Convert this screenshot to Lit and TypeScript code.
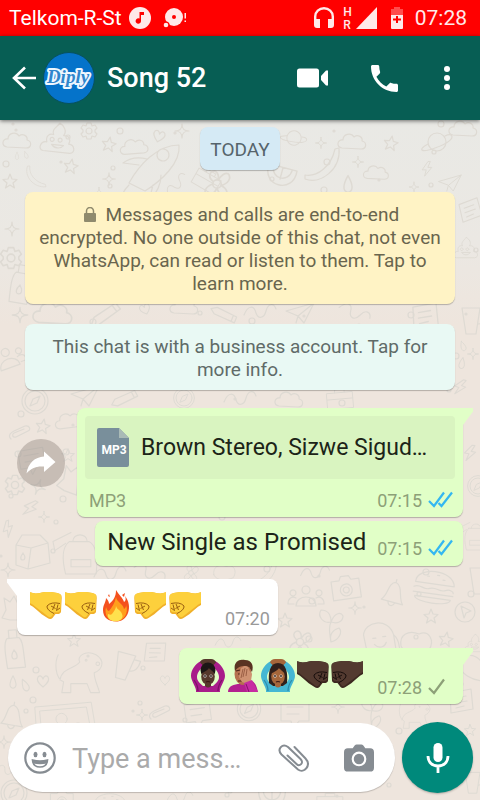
import { LitElement, html, css, svg } from "lit";
import { customElement, property } from "lit/decorators.js";
import { classMap } from "lit/directives/class-map.js";

type Placement = [shape: string, x: number, y: number, scale: number, turn: number];

const SHAPES: Record<string, string> = {
  cloud: "M-11 6C-17 5-16-3-10-2C-10-8-2-10 1-5C5-8 10-5 9-1C14 0 14 7 8 7Z",
  star: "M0-7L2-2L7-1.500L3 2L4.500 7L0 4L-4.500 7L-3 2L-7-1.500L-2-2Z",
  spark: "M0-7C0-2 2 0 7 0C2 0 0 2 0 7C0 2-2 0-7 0C-2 0 0-2 0-7Z",
  heart: "M0 6C-5 2-7-1-5-4C-3-6-1-5 0-2C1-5 3-6 5-4C7-1 5 2 0 6Z",
  gear: "M-2-8H2L3-5L6-6L8-3L6-1V1L8 3L6 6L3 5L2 8H-2L-3 5L-6 6L-8 3L-6 1V-1L-8-3L-6-6L-3-5ZM3 0A3 3 0 1 1-3 0A3 3 0 1 1 3 0",
  poop: "M-14 11C-20 10-17 1-11 2C-13-4-9-7-5-6C-8-11-2-14 0-18C5-16 8-10 5-6C11-7 13-2 11 2C17 2 19 10 13 11ZM-4-1A2 2 0 1 1-4-1.100M4-1A2 2 0 1 1 4-1.100M-6 4C-3 8 3 8 6 4Z",
  rocket: "M-26 16C-16-2 2-22 24-22C26-4 6 14-10 24ZM-16-2L-32-4C-24-10-16-10-8-8M-2 18L-6 34C2 26 6 18 6 8M14-12A6 6 0 1 1 14-12.100M-26 18C-32 24-34 30-34 34",
  banana: "M-16 12C-4 14 10 4 14-14L18-15C20 6 0 22-16 16Z",
  bolt: "M1-9L-6 1H-1L-3 9L6-2H1L4-9Z",
  planet: "M9 0A9 9 0 1 1-9 0A9 9 0 1 1 9 0M-9 2C-20 8-16 11-2 6C10 2 18-4 14-7C12-8 10-7 8-6",
  plane: "M-14-2L14-10L4 10L-2 3ZM14-10L-2 3L-4 10",
  drop: "M0-7C4 0 5 6 0 7C-5 6-4 0 0-7Z",
  clip: "M-9 5C-13 1-8-2-6-3L5-8C10-9 11-4 8-3L-4 3C-8 4-8 0-6-1L4-5",
  compass: "M13 0A13 13 0 1 1-13 0A13 13 0 1 1 13 0M10 0A10 10 0 1 1-10 0A10 10 0 1 1 10 0M-5 5L-2-2L5-5L2 2Z",
  milk: "M-16-6L-10-16H8L16-8L18 12L-4 18L-16 14ZM-16-6L-1-3L16-8M-1-3L-4 18M-9 2C-6 6-7 9-9 9C-12 9-12 6-9 2",
  bag: "M-12-16H10C18-12 20 0 18 20H-16C-20 4-20-10-12-16ZM-8-16C-8-26 8-26 8-16M-10 4H12V12H-10ZM-16-14L-28-6L-30-16L-10-26",
  bottle: "M-6-12H6C10-8 9 0 10 18H-8C-9 4-10-8-6-12ZM-4-12V-20H4V-12M0 0C4 5 3 9 0 9C-3 9-4 5 0 0",
  dog: "M-20 10C-18-4-4-2 2-10C-2-16 8-24 20-18C30-12 28-2 18 2C18 10 22 16 24 24H14L10 14H-8L-8 24H-18L-16 12C-26 8-26-10-22-18M10-12A1 1 0 1 1 10-12.100M24-8A2 2 0 1 1 24-8.100",
  bell: "M-10 8C-4 2-8-10 0-12C8-10 6 2 12 8ZM-3 8C-2 13 3 13 4 8M0-12V-15",
  leaf: "M-8-12L-2-8L2-14L6-6L12-6L8 2L10 10L-2 10L-10 8L-6 0Z",
  laptop: "M-36-10L34-16L40 20H-34ZM-30-5L28-10L33 16H-28ZM4 5A7 7 0 1 1 4 4.900",
  people: "M4-8A4 4 0 1 1-4-8A4 4 0 1 1 4-8M-10 8C-10-4 10-4 10 8ZM-10-5A3 3 0 1 1-10-5.100M16-5A3 3 0 1 1 16-5.100M-12 6H-18C-18 0-14-2-10 0M12 6H18C18 0 14-2 10 0",
  camera: "M-14-8H-6L-4-12H4L6-8H14V11H-14ZM6 2A6 6 0 1 1-6 2A6 6 0 1 1 6 2M3 2A3 3 0 1 1-3 2A3 3 0 1 1 3 2",
  burger: "M-19-3C-20-19 18-20 20-3ZM-20 2C-14-2-10 5-4 2C2-1 6 5 12 2C16 0 20 2 20 4M-20 7H20M-18 11C-18 18 18 18 18 11ZM-8-10H-6M2-12H4M8-8H10",
  cursor: "M10 0A10 10 0 1 1-10 0A10 10 0 1 1 10 0M-4-6L6-1L1 1L-1 6Z",
  ice: "M-10 26L-14-6C-12-20 12-22 16-4L18 24ZM-5-2H-2M5-3H8M-4 4C0 9 6 8 8 3M16-4C22 2 22 16 18 24",
  sprout: "M0 16C-2 4-2 0 0-4M0-4C-8-2-14-10-10-16C-4-16 0-12 0-4C4-14 10-14 12-10C12-4 6-2 0-4M0 16C8 14 12 6 8 2C2 4-2 8 0 16",
  potato: "M-16 4C-18-8-8-12 2-8C12-12 18-2 12 8C4 12-12 14-16 4Z",
  note: "M-11-8L10-12L12 8L-10 12ZM-6-3L5-5M-6 2L6 0M-5 7L3 5",
  chat: "M-14-12H14V8H4L-2 16L-4 8H-14ZM-8-6H8M-8 1H4",
  box: "M-16-8H16V12H-16ZM-16 0H16M-6-8V-12H6V-8",
  pencil: "M-12 8L-10 2L8-10L12-5L-6 8ZM5-8L9-3",
  flower: "M3 0A3 3 0 1 1-3 0A3 3 0 1 1 3 0M-3-2C-10-8 2-14 1-3C8-14 14-2 3 1C12 6 4 14 0 3C-6 14-14 4-3 0",
  melon: "M-12-10H12C14 10-14 10-12-10ZM-8-10C-8 2 8 2 8-10M0-10V0",
  wave: "M-16 4C-12-6-6-6-4 2C-2 8 4 8 6 0C8-8 14-8 16-2",
  cup: "M-8-12H10L6 14H-4ZM10-8H16C16 0 12 4 8 4",
};

const DOODLES: Placement[] = [
  ["cloud", 18, 141, 1, 0], ["poop", 58, 141, 1, 6], ["gear", 89, 131, 1, 0], ["star", 109, 144, 1, 10],
  ["cloud", 135, 147, 1, -8], ["heart", 159, 136, 1, 15], ["spark", 182, 131, 1, 0], ["rocket", 155, 167, 1, 0],
  ["star", 71, 166, 1, 10], ["star", 10, 181, 1, 0], ["drop", 17, 156, 0.5, 0], ["drop", 26, 155, 0.5, -20],
  ["banana", 37, 176, 0.6, 90], ["spark", 109, 179, 0.9, 0], ["spark", 99, 193, 0.8, 0], ["wave", 176, 184, 0.8, -40],
  ["flower", 217, 184, 1.4, 0], ["planet", 294, 138, 0.8, 30], ["spark", 321, 143, 0.8, 0], ["cloud", 353, 142, 1, 0],
  ["star", 391, 143, 1, 10], ["planet", 437, 142, 1, 0], ["cloud", 464, 129, 1, 0], ["banana", 321, 163, 1, 0],
  ["spark", 358, 162, 0.8, 0], ["cloud", 377, 173, 0.9, 0], ["bolt", 427, 169, 0.8, 0], ["plane", 450, 183, 0.8, 0],
  ["melon", 280, 179, 1.2, 15], ["box", 207, 180, 0.8, 30], ["drop", 348, 184, 1.2, 0], ["spark", 414, 187, 0.7, 0],
  ["spark", 12, 229, 1, 0], ["gear", 11, 258, 1.300, 0], ["bottle", 20, 285, 1, 10], ["spark", 20, 315, 1.1, 0],
  ["cloud", 54, 314, 1.4, 0], ["pencil", 106, 315, 1.2, 0], ["heart", 145, 309, 0.9, -20], ["cloud", 185, 307, 1, 0],
  ["pencil", 224, 315, 1, 60], ["wave", 260, 311, 1, 0], ["plane", 300, 313, 1, 0], ["wave", 355, 312, 1, 30],
  ["note", 425, 316, 1.1, 0], ["cup", 470, 320, 1, 0], ["poop", 466, 250, 0.7, 0], ["note", 470, 210, 0.9, -10],
  ["people", 8, 360, 1, -20], ["drop", 463, 346, 0.7, -20], ["spark", 473, 354, 0.8, 0], ["drop", 462, 363, 0.8, 10],
  ["compass", 35, 401, 1, 0], ["plane", 85, 396, 1, 0], ["compass", 184, 398, 0.8, 0], ["pencil", 125, 399, 1, 10],
  ["wave", 240, 398, 1, 0], ["box", 340, 399, 0.8, -5], ["cloud", 290, 400, 1, 0], ["bolt", 460, 387, 0.9, 20],
  ["clip", 20, 434, 1, 0], ["star", 43, 426, 1, 10], ["cloud", 70, 421, 1, -10], ["chat", 32, 460, 0.9, -10],
  ["star", 68, 455, 0.9, 0], ["gear", 15, 485, 1.200, 0], ["spark", 38, 487, 1.1, 20], ["leaf", 70, 481, 1.100, 20],
  ["bolt", 30, 508, 1, 30], ["spark", 44, 517, 0.8, 0], ["bolt", 8, 529, 0.9, -20], ["milk", 32, 551, 1, 0],
  ["bag", 80, 556, 0.9, 0], ["spark", 8, 570, 1, 0], ["leaf", 12, 610, 1, 0], ["bottle", 14, 650, 1, -5],
  ["bolt", 470, 453, 0.9, 10], ["compass", 478, 486, 0.8, 0], ["bag", 476, 538, 0.6, 0], ["wave", 110, 573, 1, 0],
  ["wave", 150, 572, 1, 30], ["flower", 191, 573, 0.8, 0], ["potato", 225, 572, 0.7, 0], ["banana", 262, 572, 0.8, 0],
  ["wave", 315, 572, 0.9, 0], ["dog", 78, 671, 0.9, 0], ["star", 74, 640, 0.9, 0], ["drop", 13, 682, 0.9, 0],
  ["drop", 25, 685, 0.9, -25], ["heart", 43, 681, 1, 0], ["cup", 123, 665, 1, 15], ["note", 155, 652, 0.9, 10],
  ["heart", 165, 680, 0.8, 0], ["bell", 12, 717, 1, 10], ["laptop", 64, 715, 0.8, 0], ["people", 306, 598, 1, 0],
  ["camera", 346, 588, 1, -8], ["bell", 393, 594, 1, 15], ["burger", 434, 587, 1, 8], ["spark", 355, 608, 0.9, 0],
  ["cursor", 465, 612, 1, 0], ["star", 431, 616, 1, 0], ["sprout", 331, 626, 1, 0], ["ice", 378, 640, 1, -5],
  ["potato", 417, 642, 1, 0], ["star", 446, 639, 1, 10], ["poop", 475, 645, 0.6, 0], ["star", 285, 620, 1, 0],
  ["flower", 300, 642, 1.2, 0], ["potato", 476, 668, 1, 30], ["cup", 478, 580, 1, 0], ["wave", 228, 642, 0.8, 0],
  ["compass", 249, 709, 0.9, 0], ["chat", 295, 713, 1, 0], ["spark", 338, 707, 0.9, 0], ["sprout", 372, 714, 0.9, 0],
  ["dog", 414, 714, 0.6, 0], ["note", 461, 701, 1, 0], ["chat", 198, 714, 0.9, -8], ["spark", 142, 715, 0.8, 0],
  ["clip", 160, 714, 1, 0], ["compass", 14, 793, 1, 0], ["burger", 110, 806, 0.8, 0], ["camera", 62, 800, 0.8, 0],
  ["wave", 180, 797, 0.8, 0], ["melon", 272, 801, 1.1, 0], ["box", 330, 803, 0.8, 0], ["cup", 472, 782, 0.8, 0],
  ["spark", 4, 742, 0.9, 0], ["star", 470, 730, 0.8, 0], ["wave", 8, 770, 0.7, 20],
];

const DOTS: [number, number, number][] = Array.from({ length: 150 }, (_, i) => [
  (i * 97 + 13) % 480,
  124 + ((i * 61 + ((i * i) % 37)) % 674),
  1 + (i % 3),
]);

const SKIN_YELLOW = ["#fdd03c", "#f0b02a", "#9a5f10"];
const SKIN_DARK = ["#533a30", "#3d2820", "#170d0b"];

const fist = (skin: string[], mirrored: boolean) => svg`
  <g transform=${mirrored ? "translate(35 0) scale(-1 1)" : "translate(0 0)"}>
    <path d="M2 3.300C6 5 10 4.500 14 3.500C19 2.500 27 3 32 5Q34 6 33.700 9L33 22.700Q32.500 25.500 27.500 25L24.500 29Q22.500 31 19.500 29L13.700 25.300C10 22 6 18 2 16Z" fill=${skin[1]}/>
    <path d="M2 3.300C6 5 10 4.500 14 3.500C19 2.500 27 3 32 5Q33.500 6 33.200 8L32 22Q30 24 26.500 23L23.500 27.500Q22 29 20 27.500L14.700 23.300C10 20 6 16 2 14Z" fill=${skin[0]}/>
    <path d="M19 17Q23 12.500 32 14.500M19 17Q18.500 21 26 24.500M23 17L27.500 19.500M27 15L24.500 21M30 15.500L28.500 21.500L32 19" fill="none" stroke=${skin[2]} stroke-width="1"/>
  </g>`;

const fire = svg`
  <path d="M18 1C21 6 25 9 26 13C28 12 28 9 27 7C31 12 32 18 30 24C28 30 23 32.500 18 32.500C11 32.500 5 29 5 21C5 16 8 13 8 9C10 11 11 13 11 15C16 11 18 7 18 1Z" fill="#f4511e"/>
  <path d="M10 7L11 5L12 8ZM24 6L27 4L26 8Z" fill="#f4511e"/>
  <path d="M18 8C19 14 25 14 26 20C28 19 28 17 28 16C31 24 26 32 18 32C10 32 6 26 8 18C9 21 10 22 11 22C14 18 17 14 18 8Z" fill="#ff9f1c"/>
  <path d="M18 17C19 21 23 21 24 25C26 29 22 32.300 18 32.300C12 32.300 9 29 10 25C12 26 13 26 14 25C16 22 18 20 18 17Z" fill="#ffe14d"/>`;

const okPerson = (sleeve: string, shade: string, skin: string, hair: string, long: boolean) => svg`
  <path d="M6 34C7 30 1 23 1 18C1 12 5 6 11 3L15 7C10 11 7 15 7 19C7 23 10 25 13 28H23C26 25 29 23 29 19C29 15 26 11 21 7L25 3C31 6 35 12 35 18C35 23 29 30 30 34Z" fill=${sleeve}/>
  <path d="M4 22Q8 27 8 33M32 22Q28 27 28 33" fill="none" stroke=${shade} stroke-width="1.200"/>
  <path d="M10 4.500Q11 1 15 1H21Q25 1 26 4.500L22.500 8Q18 3.500 13.500 8Z" fill=${skin}/>
  ${long ? svg`<path d="M9 25C8 14 10 5 18 5S28 14 27 25L23 28H13Z" fill=${hair}/>` : svg`<ellipse cx="18" cy="12" rx="7.500" ry="7.500" fill=${hair}/>`}
  <path d="M15 23H21V28Q18 31 15 28Z" fill=${skin}/>
  <ellipse cx="18" cy="18.500" rx="6.800" ry="8.500" fill=${skin}/>
  <path d="M11 15.500C11 6 25 6 25 15.500C22 13 20 11 19 10C17 13 14 14 11 15.500Z" fill=${hair}/>
  <circle cx="15" cy="18" r="1.500" fill="#fff"/><circle cx="21" cy="18" r="1.500" fill="#fff"/>
  <circle cx="15" cy="18" r="0.900" fill="#180b08"/><circle cx="21" cy="18" r="0.900" fill="#180b08"/>
  <path d="M16 24Q18 23 20 24" stroke="#3a1512" stroke-width="1.200" fill="none"/>`;

const facepalm = svg`
  <path d="M3 34C3 28 9 26 15 26L27 23C31 25 32 30 33 34Z" fill="#b3208f"/>
  <ellipse cx="18" cy="16" rx="8.500" ry="11" fill="#b5714f"/>
  <path d="M10 13C8 4 14 1 20 2C27 2 29 8 27 14L24 9C19 7 13 8 10 13Z" fill="#5a3323"/>
  <path d="M11 13L15 12M13 16H15M13 23H17" stroke="#4a2318" stroke-width="1.200"/>
  <path d="M14 19L16 10L18 9L19 8L21 8L23 9L24 12L27 16L26 23L22 26L17 24Z" fill="#cf9272"/>
  <path d="M16 20L18 11M18 19L20 10M21 18L22 11" stroke="#8e5238" stroke-width="0.800"/>
  <path d="M19 25L27 22L33 34H22Z" fill="#c72ca2"/><path d="M21 26L24 34" stroke="#85146a" stroke-width="1"/>`;

const EMOJI: Record<string, { label: string; art: unknown }> = {
  rightFist: { label: "right-facing fist", art: fist(SKIN_YELLOW, false) },
  leftFist: { label: "left-facing fist", art: fist(SKIN_YELLOW, true) },
  rightFistDark: { label: "right-facing fist, dark", art: fist(SKIN_DARK, false) },
  leftFistDark: { label: "left-facing fist, dark", art: fist(SKIN_DARK, true) },
  fire: { label: "fire", art: fire },
  manOk: { label: "man gesturing OK", art: okPerson("#a91c8a", "#7a1063", "#56382c", "#1d1716", false) },
  womanOk: { label: "woman gesturing OK", art: okPerson("#45b7d3", "#2b8aa8", "#a5663b", "#30201c", true) },
  facepalm: { label: "man facepalming", art: facepalm },
};

const reset = css`
  * { box-sizing: border-box; }
  svg { display: block; flex: none; }
  button { display: grid; place-items: center; flex: none; margin: 0; padding: 0; border: 0; background: none; color: inherit; font: inherit; cursor: pointer; }
`;

@customElement("status-bar")
class StatusBar extends LitElement {
  static styles = [reset, css`
    :host { display: flex; align-items: center; height: 36px; padding: 0 13px 0 9px; background: #f00; color: #ffe9e9; font-size: 21px; line-height: 24px; }
    .carrier { color: #fff; margin-right: 7px; }
    .disc { margin-left: 12px; }
    .right { display: flex; align-items: center; margin-left: auto; }
    .roam { font-size: 12px; line-height: 13px; font-weight: 500; margin: 0 4px 0 9px; padding-top: 2px; }
    .battery { margin: 0 12px 0 14px; }
  `];
  render() {
    return html`
      <span class="carrier">Telkom-R-St</span>
      <svg width="22" height="22" viewBox="0 0 22 22" aria-hidden="true">
        <circle cx="11" cy="11" r="11" fill="currentColor"/>
        <path d="M10.500 5H15V8H12V14A2.700 2.700 0 1 1 10.500 11.600Z" fill="#f00"/>
      </svg>
      <svg class="disc" width="25" height="22" viewBox="0 0 25 22" aria-hidden="true">
        <circle cx="11" cy="10" r="9" fill="currentColor"/><circle cx="11" cy="10" r="2" fill="#f00"/>
        <circle cx="3" cy="18" r="3.500" fill="#f00"/><circle cx="3" cy="18" r="2.300" fill="currentColor"/>
        <path d="M21.500 6H23V11.500H21.500ZM21.500 13.500H23V15H21.500Z" fill="currentColor"/>
      </svg>
      <div class="right">
        <svg width="20" height="22" viewBox="0 0 20 22" aria-hidden="true">
          <path d="M1.200 18V9.500A8.800 8.300 0 0 1 18.800 9.500V18" fill="none" stroke="currentColor" stroke-width="2.400"/>
          <path d="M0 12H6V21H3Q0 21 0 18ZM14 12H20V18Q20 21 17 21H14Z" fill="currentColor"/>
        </svg>
        <div class="roam">H<br>R</div>
        <svg width="21" height="22" viewBox="0 0 21 22" aria-hidden="true"><path d="M21 0V22H0Z" fill="currentColor"/></svg>
        <svg class="battery" width="12" height="22" viewBox="0 0 12 22" aria-hidden="true">
          <path d="M3 0H9V2H12V9H0V2H3Z" fill="#ff4d4d"/><path d="M0 8H12V21Q12 22 11 22H1Q0 22 0 21Z" fill="currentColor"/>
          <path d="M5 9H7V11.500H10V13.500H7V16H5V13.500H2V11.500H5Z" fill="#f00"/>
        </svg>
        <time>07:28</time>
      </div>`;
  }
}

@customElement("chat-header")
class ChatHeader extends LitElement {
  static styles = [reset, css`
    :host { display: flex; align-items: center; height: 84px; padding: 0 17px 0 12px; background: #075e54; color: #fff; position: relative; z-index: 1; box-shadow: 0 1px 4px rgba(0, 0, 0, .55); }
    .avatar { width: 52px; height: 52px; margin-left: 7px; }
    h1 { flex: 1; min-width: 0; margin: 0 0 0 12px; font-size: 27px; line-height: 32px; font-weight: 500; }
    .actions { display: flex; align-items: center; gap: 24px; }
    .action { width: 48px; height: 48px; }
    .more { width: 32px; margin-left: -1px; }
    .logo { font: italic 700 19px "Liberation Serif", serif; }
  `];
  render() {
    return html`
      <button aria-label="Back">
        <svg width="24" height="24" viewBox="0 0 24 24"><path d="M13 1.500L2 12L13 22.500M2 12H24" fill="none" stroke="currentColor" stroke-width="2.600"/></svg>
      </button>
      <svg class="avatar" viewBox="0 0 52 52" role="img" aria-label="Diply">
        <circle cx="26" cy="26" r="25.500" fill="#0573ca" stroke="#07515f"/>
        <text class="logo" x="25" y="31" text-anchor="middle" fill="#2f86cc" stroke="#eef7ff" stroke-width="4" stroke-linejoin="round" paint-order="stroke">Diply</text>
      </svg>
      <h1>Song 52</h1>
      <div class="actions">
        <button class="action" aria-label="Video call">
          <svg width="31" height="20" viewBox="0 0 31 20"><rect width="22" height="19" y="0.500" rx="2.500" fill="currentColor"/><path d="M24 8L29 2.500H31V17.500H29L24 12Z" fill="currentColor"/></svg>
        </button>
        <button class="action" aria-label="Voice call">
          <svg width="27" height="27" viewBox="3 3 18 18"><path fill="currentColor" d="M6.620 10.790c1.440 2.830 3.760 5.140 6.590 6.590l2.200-2.200c.270-.270.670-.360 1.020-.240 1.120.370 2.330.570 3.570.570.550 0 1 .450 1 1V20c0 .550-.450 1-1 1-9.390 0-17-7.610-17-17 0-.550.450-1 1-1h3.500c.550 0 1 .450 1 1 0 1.250.200 2.450.570 3.570.110.350.030.740-.250 1.020l-2.200 2.200z"/></svg>
        </button>
        <button class="action more" aria-label="More options">
          <svg width="6" height="24" viewBox="0 0 6 24"><circle cx="3" cy="3" r="3" fill="currentColor"/><circle cx="3" cy="12" r="3" fill="currentColor"/><circle cx="3" cy="21" r="3" fill="currentColor"/></svg>
        </button>
      </div>`;
  }
}

@customElement("message-meta")
class MessageMeta extends LitElement {
  @property() time = "";
  @property() ticks = "";
  static styles = [reset, css`
    :host { display: flex; align-items: center; gap: 6px; flex: none; font-size: 18px; line-height: 22px; color: #8da078; }
    .blue { color: #34b7f1; }
    .incoming { color: #999; }
    .tick { margin-bottom: 4px; }
  `];
  render() {
    return html`<time class=${classMap({ incoming: !this.ticks })}>${this.time}</time>
      ${this.ticks ? html`<svg class=${classMap({ tick: true, blue: this.ticks === "read" })} width="25" height="17" viewBox="0 0 25 17" role="img" aria-label=${this.ticks}>
        <g fill="none" stroke="currentColor" stroke-width="2.200">
          <path d="M1 10L6 15L16 1.500"/>${this.ticks === "read" ? svg`<path d="M10.500 12L13.500 15L24 1.500"/>` : ""}
        </g></svg>` : ""}`;
  }
}

@customElement("message-bubble")
class MessageBubble extends LitElement {
  static properties = { incoming: { type: Boolean, reflect: true }, tail: { type: Boolean, reflect: true } };
  static styles = [reset, css`
    :host { display: block; position: relative; width: fit-content; margin-left: auto; border-radius: 8px; background: #e1ffc7; box-shadow: 0 1px 1px rgba(0, 0, 0, .25); }
    :host([incoming]) { margin-left: 0; background: #fff; }
    :host([tail]) { border-top-right-radius: 0; }
    :host([tail][incoming]) { border-top-left-radius: 0; border-top-right-radius: 8px; }
    :host([tail])::after { content: ""; position: absolute; top: 0; left: 100%; width: 10px; height: 17px; background: inherit; clip-path: polygon(0 0, 100% 0, 100% 20%, 0 100%); }
    :host([tail][incoming])::after { left: auto; right: 100%; clip-path: polygon(0 0, 100% 0, 100% 100%, 0 20%); }
  `];
  render() { return html`<slot></slot>`; }
}

@customElement("app-root")
class AppRoot extends LitElement {
  static styles = [reset, css`
    :host { display: flex; flex-direction: column; min-height: 100vh; font-family: Roboto, "Noto Sans", sans-serif; color: #1c2418; }
    .screen { flex: 1; position: relative; display: flex; flex-direction: column; background: linear-gradient(#e9e9e5, #ebe8e3 18%, #eee5dd 30%, #eee5dd); }
    .wallpaper { position: absolute; inset: 0; width: 100%; height: 100%; overflow: hidden; }
    .chat { position: relative; display: flex; flex-direction: column; padding: 7px 17px 0; }
    .day, .notice { border-radius: 8px; font-size: 19px; line-height: 23px; text-align: center; box-shadow: 0 1px 1px rgba(0, 0, 0, .25); }
    .day { align-self: center; padding: 11px 10px 9px; background: #d5eaf5; color: #56646b; }
    .notice { margin: 22px 8px 0; padding: 11px 10px 9px; background: #fff3c5; color: #69654e; }
    .notice.business { margin-top: 20px; padding: 11px 24px 9px; background: #e9f9f4; color: #606b68; }
    .lock { display: inline-block; margin-right: 2px; vertical-align: -1px; }
    .row { display: flex; align-items: center; gap: 12px; margin-top: 18px; }
    .forward { width: 48px; height: 48px; border-radius: 50%; background: rgba(150, 140, 134, .45); color: #fff; }
    .doc { flex: 1; min-width: 0; }
    .file { display: flex; align-items: center; gap: 12px; margin: 8px 8px 0; height: 63px; padding: 0 12px; border-radius: 4px; background: #d9f4c0; }
    .file-name { min-width: 0; overflow: hidden; white-space: nowrap; text-overflow: ellipsis; font-size: 23px; line-height: 28px; }
    .file-type { font-size: 18px; line-height: 22px; color: #8da078; }
    .footer { display: flex; justify-content: space-between; padding: 11px 10px 5px 12px; }
    .badge { font: 700 12px Roboto, sans-serif; }
    .line { display: flex; align-items: flex-end; gap: 11px; padding: 7px 10px 6px 12px; }
    .line p { margin: 0 0 4px; font-size: 24px; line-height: 28px; }
    .emoji-line { display: flex; align-items: flex-end; gap: 12px; padding: 10px 10px 5px 11px; }
    .emoji-line.in { gap: 22px; padding-right: 8px; }
    .emojis { display: flex; margin-bottom: 7px; }
    .short { margin-top: 4px; }
    .spaced { margin-top: 13px; }
    .composer { position: relative; display: flex; align-items: center; gap: 7px; margin-top: auto; padding: 18px 7px 7px 8px; }
    .pill { flex: 1; min-width: 0; height: 69px; display: flex; align-items: center; padding: 0 21px 0 16px; border-radius: 35px; background: #fff; color: #868c92; box-shadow: 0 1px 1px rgba(0, 0, 0, .2); }
    .pill input { flex: 1; min-width: 0; margin: 0 16px; padding: 2px 0 0; border: 0; outline: 0; background: none; font: 27px/32px Roboto, "Noto Sans", sans-serif; color: #222; text-overflow: ellipsis; }
    .pill input::placeholder { color: #aaa; opacity: 1; }
    .attach { margin: 0 35px 0 16px; }
    .mic { width: 71px; height: 71px; border-radius: 50%; background: #00897b; color: #fff; box-shadow: 0 1px 2px rgba(0, 0, 0, .25); }
  `];

  private emojis(names: string[]) {
    return html`<div class="emojis">${names.map((name) => html`
      <svg width="35" height="34" viewBox="0 0 35 34" role="img" aria-label=${EMOJI[name].label}>${EMOJI[name].art}</svg>`)}</div>`;
  }

  render() {
    return html`
      <status-bar></status-bar>
      <chat-header></chat-header>
      <div class="screen">
        <svg class="wallpaper" aria-hidden="true">
          <g transform="translate(0 -120)" fill="none" stroke="#dedad3" stroke-width="1.200" stroke-linejoin="round" stroke-linecap="round">
            ${DOTS.map(([x, y, r]) => svg`<circle cx=${x} cy=${y} r=${r}/>`)}
            ${DOODLES.map(([shape, x, y, scale, turn]) => svg`<path d=${SHAPES[shape]} transform=${`translate(${x} ${y}) rotate(${turn}) scale(${scale})`}/>`)}
          </g>
        </svg>
        <main class="chat">
          <div class="day">TODAY</div>
          <div class="notice">
            <svg class="lock" width="18" height="15" viewBox="0 0 18 15" aria-hidden="true"><rect x="3" y="6" width="12" height="9" rx="1" fill="#8f8a6d"/><path d="M5.500 6V4A3.500 3.500 0 0 1 12.500 4V6" fill="none" stroke="#8f8a6d" stroke-width="1.500"/></svg>
            Messages and calls are end-to-end encrypted. No one outside of this chat, not even WhatsApp, can read or listen to them. Tap to learn more.
          </div>
          <div class="notice business">This chat is with a business account. Tap for more info.</div>
          <div class="row">
            <button class="forward" aria-label="Forward">
              <svg width="30" height="23" viewBox="0 0 30 23"><path d="M18 0.500L29.500 11L18 21V15.500C10 15 5 17 0.500 22.500C2 12 9 6 18 5.500Z" fill="currentColor"/></svg>
            </button>
            <message-bubble class="doc" tail>
              <div class="file">
                <svg width="32" height="39" viewBox="0 0 32 39" role="img" aria-label="MP3 file">
                  <path d="M2 0H22L32 10V37Q32 39 30 39H2Q0 39 0 37V2Q0 0 2 0Z" fill="#798f9b"/><path d="M22 0L32 10H22Z" fill="#a9bab6"/>
                  <text class="badge" x="17" y="26" text-anchor="middle" fill="#fff">MP3</text>
                </svg>
                <span class="file-name">Brown Stereo, Sizwe Sigud…</span>
              </div>
              <div class="footer"><span class="file-type">MP3</span><message-meta time="07:15" ticks="read"></message-meta></div>
            </message-bubble>
          </div>
          <message-bubble class="short"><div class="line"><p>New Single as Promised</p><message-meta time="07:15" ticks="read"></message-meta></div></message-bubble>
          <message-bubble class="spaced" incoming tail>
            <div class="emoji-line in">${this.emojis(["rightFist", "rightFist", "fire", "leftFist", "leftFist"])}<message-meta time="07:20"></message-meta></div>
          </message-bubble>
          <message-bubble class="spaced" tail>
            <div class="emoji-line">${this.emojis(["manOk", "facepalm", "womanOk", "rightFistDark", "leftFistDark"])}<message-meta time="07:28" ticks="sent"></message-meta></div>
          </message-bubble>
        </main>
        <form class="composer" @submit=${(e: Event) => e.preventDefault()}>
          <div class="pill">
            <button type="button" aria-label="Emoji">
              <svg width="32" height="32" viewBox="0 0 32 32"><circle cx="16" cy="16" r="14.700" fill="none" stroke="currentColor" stroke-width="2.200"/><ellipse cx="11.500" cy="12.500" rx="2" ry="2.700" fill="currentColor"/><ellipse cx="20.500" cy="12.500" rx="2" ry="2.700" fill="currentColor"/><path d="M8.500 18Q16 20 23.500 18Q23 25 16 25T8.500 18Z" fill="none" stroke="currentColor" stroke-width="1.600"/><path d="M8 18Q16 20 24 18L23 21.500Q16 23 9 21.500Z" fill="currentColor"/></svg>
            </button>
            <input type="text" aria-label="Message" placeholder="Type a mess…">
            <button type="button" class="attach" aria-label="Attach">
              <svg width="32" height="32" viewBox="0 0 32 32"><path d="M17 4L28 15.500C34 22 27 31 20.500 26.500L4 11.500C-1 6 5 0 10.500 4L23 16C27 20 22 24 19 21L10 12.500" transform="translate(0.500 1)" fill="none" stroke="currentColor" stroke-width="2" stroke-linecap="round" stroke-linejoin="round"/></svg>
            </button>
            <button type="button" aria-label="Camera">
              <svg width="30" height="28" viewBox="0 0 31 28"><path d="M4 4H9L11 1Q12 0 13 0H18Q19 0 20 1L22 4H27Q31 4 31 8V24Q31 28 27 28H4Q0 28 0 24V8Q0 4 4 4Z" fill="currentColor"/><circle cx="15.500" cy="15" r="6.500" fill="none" stroke="#fff" stroke-width="2.200"/></svg>
            </button>
          </div>
          <button class="mic" type="button" aria-label="Record voice message">
            <svg width="24" height="30" viewBox="0 0 24 30"><rect x="7.500" y="0" width="9" height="19" rx="4.500" fill="currentColor"/><path d="M2 13C2 19 6 23 12 23S22 19 22 13M12 23V30" fill="none" stroke="currentColor" stroke-width="2.800"/></svg>
          </button>
        </form>
      </div>`;
  }
}
